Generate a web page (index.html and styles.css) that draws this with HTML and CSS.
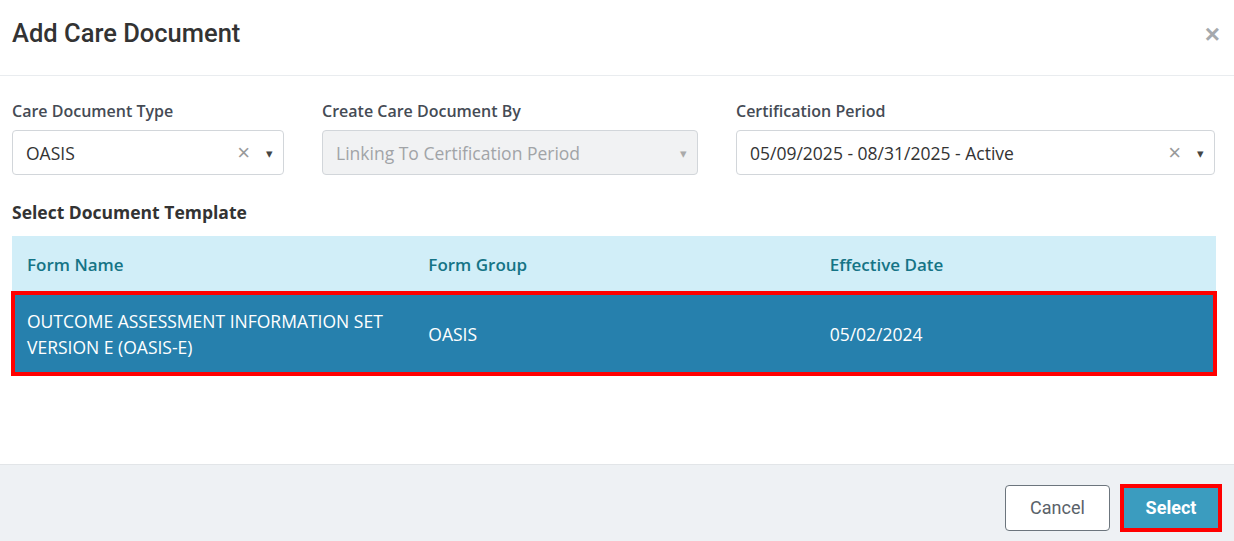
FILE: index.html
```html
<!DOCTYPE html>
<html lang="en">
<head>
    <meta charset="UTF-8">
    <title>Add Care Document</title>
    <link rel="stylesheet" href="styles.css">
</head>
<body>
    <div class="modal">
        <div class="modal-header">
            <h2>Add Care Document</h2>
            <span class="close">&times;</span>
        </div>

        <div class="modal-body">
            <div class="fields">
                <div class="field">
                    <label>Care Document Type</label>
                    <div class="select">
                        <span class="value">OASIS</span>
                        <span class="clear">&times;</span>
                        <span class="arrow">&#9662;</span>
                    </div>
                </div>
                <div class="field">
                    <label>Create Care Document By</label>
                    <div class="select disabled">
                        <span class="value">Linking To Certification Period</span>
                        <span class="arrow">&#9662;</span>
                    </div>
                </div>
                <div class="field">
                    <label>Certification Period</label>
                    <div class="select">
                        <span class="value">05/09/2025 - 08/31/2025 - Active</span>
                        <span class="clear">&times;</span>
                        <span class="arrow">&#9662;</span>
                    </div>
                </div>
            </div>

            <h3 class="section-title">Select Document Template</h3>
            <table class="templates">
                <thead>
                    <tr>
                        <th>Form Name</th>
                        <th>Form Group</th>
                        <th>Effective Date</th>
                    </tr>
                </thead>
                <tbody>
                    <tr class="selected">
                        <td>OUTCOME ASSESSMENT INFORMATION SET VERSION E (OASIS-E)</td>
                        <td>OASIS</td>
                        <td>05/02/2024</td>
                    </tr>
                </tbody>
            </table>
        </div>

        <div class="modal-footer">
            <button class="btn btn-cancel">Cancel</button>
            <button class="btn btn-select">Select</button>
        </div>
    </div>
</body>
</html>
```

FILE: styles.css
```css
body {
    margin: 0;
    background-color: #fff;
    font-family: "Open Sans", Arial, sans-serif;
    color: #333;
}

.modal {
    width: 1234px;
    height: 541px;
    display: flex;
    flex-direction: column;
}

.modal-header {
    height: 76px;
    border-bottom: 1px solid #e9ecef;
    display: flex;
    align-items: center;
    justify-content: space-between;
    padding: 0 12px;
    box-sizing: border-box;
}

.modal-header h2 {
    margin: 0 0 10px 0;
    font-family: Roboto, Arial, sans-serif;
    font-weight: 500;
    font-size: 25.5px;
    color: #333;
}

.close {
    font-family: Arial, sans-serif;
    font-size: 26px;
    font-weight: bold;
    color: #a5a9ad;
    margin-top: -6px;
    margin-right: 2px;
}

.modal-body {
    flex: 1;
    padding: 24px 12px 0 12px;
}

.fields {
    display: grid;
    grid-template-columns: 272px 376px 479px;
    column-gap: 38px;
}

.field label {
    display: block;
    font-size: 16px;
    font-weight: 600;
    color: #454b55;
    line-height: 22px;
    margin-bottom: 8px;
}

.select {
    height: 45px;
    box-sizing: border-box;
    border: 1px solid #d2d6da;
    border-radius: 4px;
    display: flex;
    align-items: center;
    padding: 0 10px 0 13px;
    font-size: 17.5px;
    color: #333;
}

.select .value {
    flex: 1;
}

.select .clear {
    font-family: Arial, sans-serif;
    font-size: 22px;
    color: #9a9a9a;
    margin-right: 16px;
}

.select .arrow {
    font-size: 13px;
    color: #444;
}

.select.disabled {
    background-color: #f1f2f3;
    color: #a1a4a7;
}

.select.disabled .arrow {
    color: #aaa;
}

.section-title {
    margin: 26px 0 13px 0;
    font-size: 17.5px;
    font-weight: 700;
    color: #333;
    line-height: 22px;
}

.templates {
    width: 1204px;
    table-layout: fixed;
    border-collapse: collapse;
}

.templates th {
    background-color: #d1eef8;
    color: #157486;
    font-weight: 600;
    font-size: 17px;
    text-align: left;
    height: 56px;
    padding: 0 15px;
}

.templates td {
    height: 83px;
    padding: 0 15px;
    font-size: 17.5px;
    line-height: 26px;
    color: #fff;
}

.templates tr.selected {
    background-color: #2680ad;
    outline: 4px solid #ff0000;
    outline-offset: -3px;
}

.modal-footer {
    height: 77px;
    box-sizing: border-box;
    background-color: #eef1f4;
    border-top: 1px solid #e2e5e8;
    display: flex;
    justify-content: flex-end;
    align-items: center;
    padding: 9px 12px 0 0;
    gap: 10px;
}

.btn {
    font-family: Roboto, Arial, sans-serif;
    font-size: 18px;
    height: 46px;
    border-radius: 4px;
    cursor: pointer;
}

.btn-cancel {
    width: 105px;
    background-color: #fff;
    border: 1px solid #6c757d;
    color: #5a6269;
}

.btn-select {
    width: 102px;
    background-color: #3b9cbf;
    color: #fff;
    font-weight: bold;
    border: 4px solid #ff0000;
    border-radius: 0;
    height: 48px;
}
```
